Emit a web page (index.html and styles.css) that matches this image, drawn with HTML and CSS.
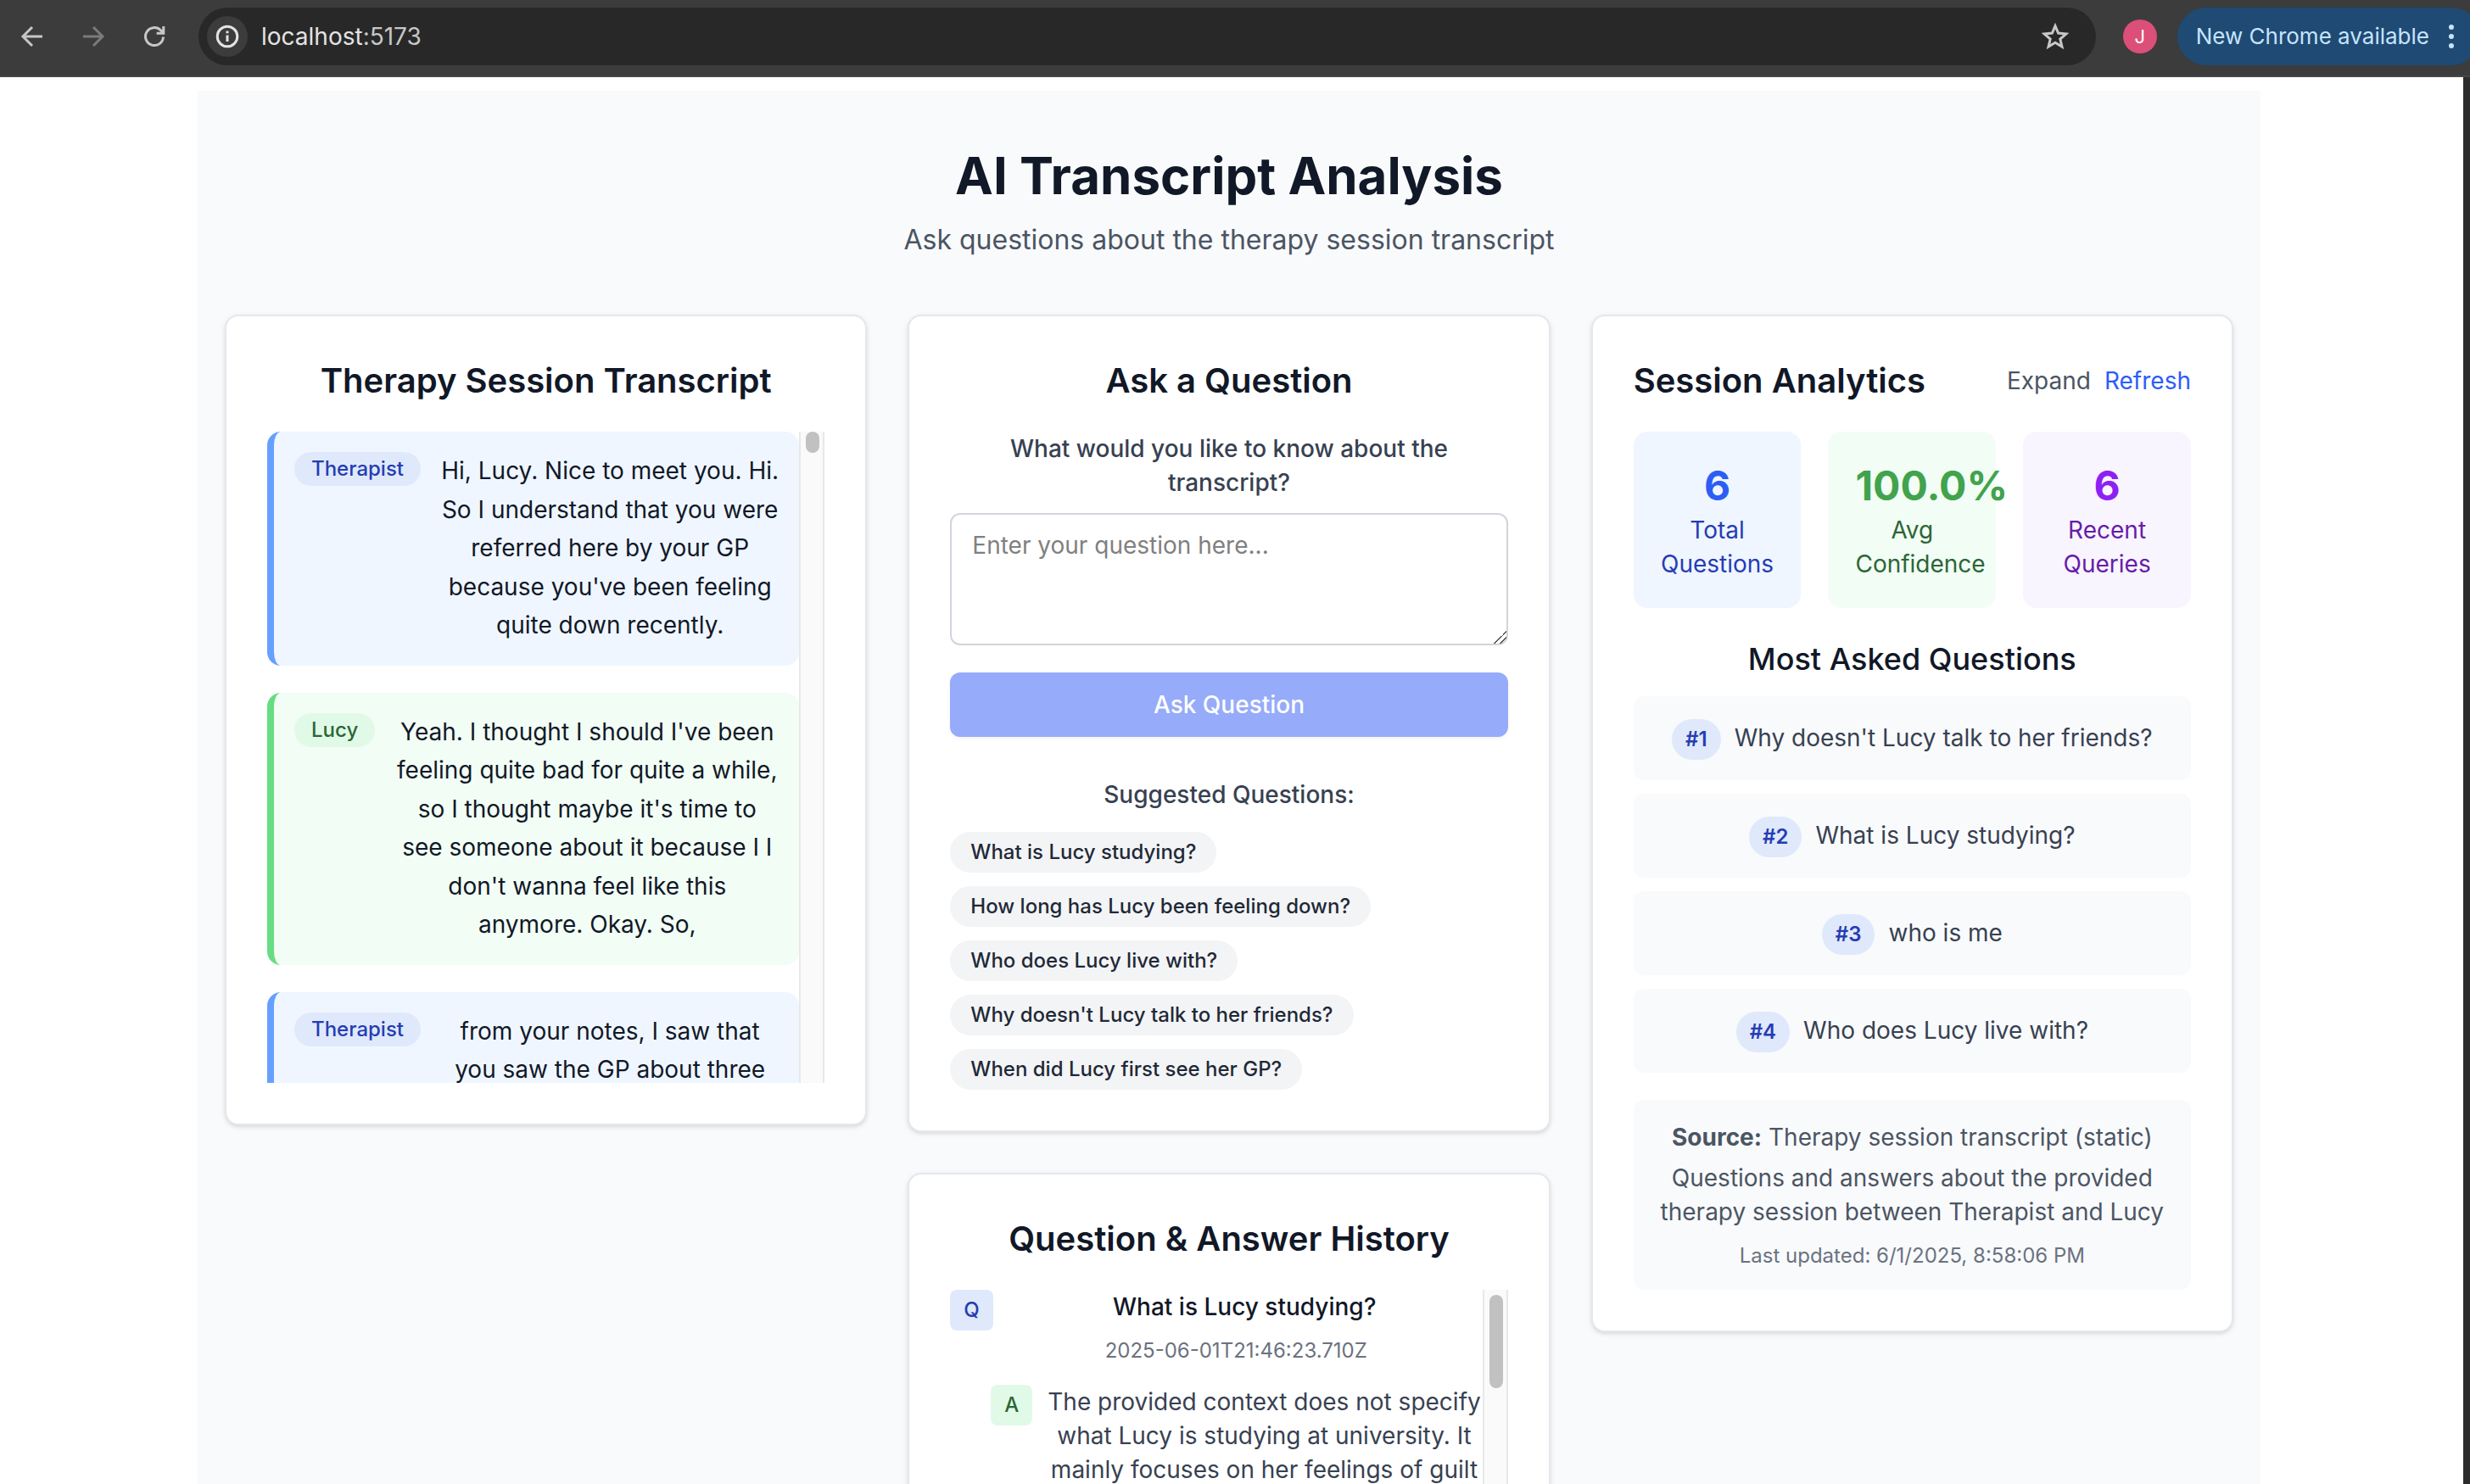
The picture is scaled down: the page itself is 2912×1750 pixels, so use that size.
FILE: index.html
```html
<!DOCTYPE html>
<html lang="en">
<head>
<meta charset="utf-8">
<title>AI Transcript Analysis</title>
<link rel="stylesheet" href="styles.css">
</head>
<body>
<div class="browser">
  <header class="toolbar">
    <nav class="toolbar-nav" aria-label="Browser">
      <button class="icon-button" type="button" aria-label="Back"><svg class="icon" viewBox="0 0 32 32"><path d="M28 16H5.500M16 5 5 16l11 11" /></svg></button>
      <button class="icon-button icon-button-off" type="button" aria-label="Forward" disabled><svg class="icon" viewBox="0 0 32 32"><path d="M4 16h22.500M16 5l11 11-11 11" /></svg></button>
      <button class="icon-button" type="button" aria-label="Reload"><svg class="icon" viewBox="0 0 32 32"><path d="M26.500 16.500A10.500 10.500 0 1 1 23.400 8.600L26.500 11.500M26.800 4v8.200H18.600" /></svg></button>
    </nav>
    <div class="address">
      <button class="site-info" type="button" aria-label="Site information"><svg class="icon" viewBox="0 0 32 32"><circle cx="16" cy="16" r="11.800" /><path d="M16 14.500v7.500M16 9.500v2.700" /></svg></button>
      <span class="address-text">localhost<span class="address-port">:5173</span></span>
      <button class="star" type="button" aria-label="Bookmark this page"><svg class="icon" viewBox="0 0 32 32"><path d="M16 3.500 19.600 12.100 28.900 12.900 21.800 19 24 28.100 16 23.200 8 28.100 10.200 19 3.100 12.900 12.400 12.100Z" /></svg></button>
    </div>
    <button class="avatar" type="button">J</button>
    <button class="update" type="button">New Chrome available<svg class="dots" viewBox="0 0 8 32"><circle cx="4" cy="5" r="3" /><circle cx="4" cy="16" r="3" /><circle cx="4" cy="27" r="3" /></svg></button>
  </header>

  <div class="page">
    <main class="app">
      <header class="hero">
        <h1 class="hero-title">AI Transcript Analysis</h1>
        <p class="hero-sub">Ask questions about the therapy session transcript</p>
      </header>

      <div class="columns">
        <section class="card">
          <h2 class="card-title">Therapy Session Transcript</h2>
          <div class="scroller">
            <div class="scroller-view turns">
              <article class="turn turn-blue">
                <span class="speaker speaker-blue">Therapist</span>
                <p class="turn-text">Hi, Lucy. Nice to meet you. Hi. So I understand that you were referred here by your GP because you've been feeling quite down recently.</p>
              </article>
              <article class="turn turn-green">
                <span class="speaker speaker-green">Lucy</span>
                <p class="turn-text">Yeah. I thought I should I've been feeling quite bad for quite a while, so I thought maybe it's time to see someone about it because I I don't wanna feel like this anymore. Okay. So,</p>
              </article>
              <article class="turn turn-blue">
                <span class="speaker speaker-blue">Therapist</span>
                <p class="turn-text">from your notes, I saw that you saw the GP about three</p>
              </article>
            </div>
            <div class="track" aria-hidden="true"><div class="thumb thumb-short"></div></div>
          </div>
        </section>

        <div class="stack">
          <section class="card">
            <h2 class="card-title">Ask a Question</h2>
            <form class="ask">
              <label class="ask-label" for="question">What would you like to know about the transcript?</label>
              <textarea class="ask-input" id="question" rows="3" placeholder="Enter your question here..."></textarea>
              <button class="ask-button" type="button">Ask Question</button>
            </form>
            <h3 class="suggest-title">Suggested Questions:</h3>
            <div class="suggestions">
              <button class="chip" type="button">What is Lucy studying?</button>
              <button class="chip" type="button">How long has Lucy been feeling down?</button>
              <button class="chip" type="button">Who does Lucy live with?</button>
              <button class="chip" type="button">Why doesn't Lucy talk to her friends?</button>
              <button class="chip" type="button">When did Lucy first see her GP?</button>
            </div>
          </section>

          <section class="card">
            <h2 class="card-title">Question &amp; Answer History</h2>
            <div class="scroller">
              <div class="scroller-view">
                <div class="entry">
                  <span class="mark mark-q">Q</span>
                  <div class="entry-body">
                    <p class="entry-question">What is Lucy studying?</p>
                    <p class="entry-time">2025-06-01T21:46:23.710Z</p>
                  </div>
                </div>
                <div class="entry entry-answer">
                  <span class="mark mark-a">A</span>
                  <p class="entry-body">The provided context does not specify what Lucy is studying at university. It mainly focuses on her feelings of guilt</p>
                </div>
              </div>
              <div class="track" aria-hidden="true"><div class="thumb thumb-long"></div></div>
            </div>
          </section>
        </div>

        <section class="card">
          <div class="card-head">
            <h2 class="card-title">Session Analytics</h2>
            <div class="card-actions">
              <button class="link" type="button">Expand</button>
              <button class="link link-blue" type="button">Refresh</button>
            </div>
          </div>
          <div class="stats">
            <div class="stat stat-blue"><div class="stat-value">6</div><div class="stat-label">Total Questions</div></div>
            <div class="stat stat-green"><div class="stat-value">100.0%</div><div class="stat-label">Avg Confidence</div></div>
            <div class="stat stat-purple"><div class="stat-value">6</div><div class="stat-label">Recent Queries</div></div>
          </div>
          <h3 class="top-title">Most Asked Questions</h3>
          <div class="top-list">
            <div class="top-item"><span class="rank">#1</span><span class="top-text">Why doesn't Lucy talk to her friends?</span></div>
            <div class="top-item"><span class="rank">#2</span><span class="top-text">What is Lucy studying?</span></div>
            <div class="top-item"><span class="rank">#3</span><span class="top-text">who is me</span></div>
            <div class="top-item"><span class="rank">#4</span><span class="top-text">Who does Lucy live with?</span></div>
          </div>
          <div class="source">
            <p><strong>Source:</strong> Therapy session transcript (static)</p>
            <p class="source-about">Questions and answers about the provided therapy session between Therapist and Lucy</p>
            <p class="source-time">Last updated: 6/1/2025, 8:58:06 PM</p>
          </div>
        </section>
      </div>
    </main>
  </div>
</div>
</body>
</html>
```
FILE: styles.css
```css
*, *::before, *::after { box-sizing: border-box; }

body, h1, h2, h3, p { margin: 0; }

body {
  background: #fff;
  color: #111827;
  font-family: Inter, "Liberation Sans", sans-serif;
  font-size: 32px;
  line-height: 48px;
}

button, textarea { font: inherit; color: inherit; }

button {
  display: flex;
  align-items: center;
  justify-content: center;
  padding: 0;
  border: 0;
  background: none;
}

.browser {
  display: flex;
  flex-direction: column;
  height: 100vh;
  overflow: hidden;
}

/* Browser toolbar */
.toolbar {
  display: flex;
  flex: none;
  align-items: center;
  padding: 9px 0 12px 22px;
  border-bottom: 2px solid #474747;
  background: #3c3c3c;
  color: #c7c7c7;
}

.toolbar-nav { display: flex; gap: 40px; margin-right: 36px; }
.icon-button { width: 32px; height: 32px; }
.icon-button-off { color: #7b7b7b; }

.icon {
  display: block;
  width: 32px;
  height: 32px;
  fill: none;
  stroke: currentColor;
  stroke-width: 3;
}

.address {
  display: flex;
  flex: 1;
  align-items: center;
  height: 68px;
  padding: 0 32px 0 10px;
  border-radius: 34px;
  background: #282828;
}

.site-info {
  width: 48px;
  height: 48px;
  margin-right: 16px;
  border-radius: 24px;
  background: #3c3c3c;
  color: #e3e3e3;
}

.address-text { flex: 1; color: #e3e3e3; font-size: 28px; }
.address-port { color: #c7c7c7; }

.avatar {
  width: 40px;
  height: 40px;
  margin: 0 24px 0 32px;
  border-radius: 20px;
  background: #db4f79;
  color: #fff;
  font-size: 22px;
}

.update {
  gap: 22px;
  height: 68px;
  margin-right: -12px;
  padding: 0 30px 0 22px;
  border-radius: 34px;
  background: #1f4a73;
  color: #c6e4ff;
  font-size: 26px;
  white-space: nowrap;
}

.dots { width: 8px; height: 32px; fill: currentColor; }

/* Page */
.page {
  flex: 1;
  min-height: 0;
  padding: 16px 6px 0 0;
  border-right: 8px solid #2c2c2c;
}

.app {
  max-width: 2432px;
  min-height: 100%;
  margin: 0 auto;
  padding: 64px 32px;
  background: #f9fafc;
}

.hero { margin-bottom: 64px; text-align: center; }
.hero-title { margin-bottom: 16px; font-size: 60px; font-weight: 700; line-height: 72px; }
.hero-sub { color: #4b5563; }

.columns {
  display: grid;
  grid-template-columns: repeat(3, minmax(0, 1fr));
  gap: 48px;
  align-items: start;
}

.stack { display: grid; gap: 48px; }

.card {
  padding: 48px;
  border: 2px solid #e5e7eb;
  border-radius: 16px;
  background: #fff;
  box-shadow: 0 2px 6px rgba(0, 0, 0, .1), 0 2px 4px -2px rgba(0, 0, 0, .1);
  font-size: 28px;
  line-height: 40px;
  text-align: center;
}

.card-title { margin-bottom: 32px; font-size: 40px; font-weight: 600; line-height: 56px; }

/* Scrolling panes */
.scroller { display: flex; height: 768px; }
.scroller-view { flex: 1; min-width: 0; overflow: hidden; }

.track {
  flex: none;
  width: 30px;
  padding-left: 6px;
  border: solid #e8e8e8;
  border-width: 0 2px;
  background: #fafafa;
}

.thumb { width: 16px; border-radius: 8px; background: #c1c1c1; }
.thumb-short { height: 25px; }
.thumb-long { height: 110px; margin-top: 6px; }

/* Transcript */
.turns { display: flex; flex-direction: column; gap: 32px; }

.turn {
  display: flex;
  flex: none;
  gap: 24px;
  align-items: flex-start;
  padding: 24px;
  border-left: 8px solid;
  border-radius: 16px;
}

.turn-blue { border-color: #66a0ff; background: #eff6ff; }
.turn-green { border-color: #68dc82; background: #f2fdf5; }
.turn-text { flex: 1; line-height: 1.625; }

.speaker {
  padding: 4px 20px;
  border-radius: 20px;
  font-size: 24px;
  font-weight: 500;
  line-height: 32px;
}

.speaker-blue { background: #dfe9fb; color: #263cb4; }
.speaker-green { background: #e1fae8; color: #2c6636; }

/* Ask form */
.ask { display: flex; flex-direction: column; }
.ask-label { margin-bottom: 16px; color: #374151; font-weight: 500; }

.ask-input {
  display: block;
  width: 100%;
  margin: 0 0 32px;
  padding: 16px 24px;
  border: 2px solid #d1d5db;
  border-radius: 12px;
  resize: vertical;
}

.ask-input::placeholder { color: #808080; }

.ask-input::-webkit-resizer {
  background: linear-gradient(135deg, transparent 50%, #555 50%, #555 56%, transparent 56%, transparent 72%, #555 72%, #555 78%, transparent 78%);
}

.ask-button {
  height: 76px;
  border-radius: 12px;
  background: #96abfa;
  box-shadow: 0 2px 4px rgba(0, 0, 0, .05);
  color: #fff;
  font-weight: 500;
}

.suggest-title { margin: 48px 0 24px; color: #374151; font-size: 28px; font-weight: 500; }
.suggestions { display: flex; flex-direction: column; gap: 16px; align-items: flex-start; }

.chip {
  padding: 8px 24px;
  border-radius: 24px;
  background: #f3f4f6;
  color: #1f2937;
  font-size: 24px;
  font-weight: 500;
  line-height: 32px;
}

/* History */
.entry { display: flex; gap: 16px; align-items: flex-start; }
.entry-answer { margin-top: 24px; padding-left: 48px; color: #374151; }
.entry-body { flex: 1; }
.entry-question { font-weight: 500; }
.entry-time { margin-top: 16px; padding-right: 20px; color: #6b7280; font-size: 24px; line-height: 32px; }

.mark {
  padding: 8px 16px;
  border-radius: 8px;
  font-size: 24px;
  font-weight: 500;
  line-height: 32px;
}

.mark-q { background: #dfe9fb; color: #263cb4; }
.mark-a { background: #e1fae8; color: #2c6636; }

/* Analytics */
.card-head { display: flex; align-items: center; justify-content: space-between; margin-bottom: 32px; }
.card-head .card-title { margin-bottom: 0; }
.card-actions { display: flex; gap: 16px; }
.link { color: #4b5563; }
.link-blue { color: #2c5ef6; }

.stats { display: grid; grid-template-columns: repeat(3, minmax(0, 1fr)); gap: 32px; }
.stat { padding: 32px; border-radius: 16px; }
.stat-value { font-size: 48px; font-weight: 700; line-height: 64px; }
.stat-blue { background: #eff6ff; color: #263cb4; }
.stat-blue .stat-value { color: #2c5ef6; }
.stat-green { background: #f2fdf5; color: #2c6636; }
.stat-green .stat-value { color: #41a34c; }
.stat-purple { background: #f9f5ff; color: #661da8; }
.stat-purple .stat-value { color: #8f20f5; }

.top-title { margin: 32px 0 16px; font-size: 36px; font-weight: 500; line-height: 56px; }
.top-list { display: grid; gap: 16px; }

.top-item {
  padding: 24px;
  border-radius: 12px;
  background: #f9fafc;
  font-size: 32px;
  line-height: 48px;
}

.rank {
  display: inline-block;
  margin-right: 16px;
  padding: 8px 16px;
  border-radius: 24px;
  background: #dfe9fb;
  color: #263cb4;
  font-size: 24px;
  font-weight: 600;
  line-height: 32px;
}

.top-text { color: #374151; font-size: 28px; line-height: 40px; }

.source {
  margin-top: 32px;
  padding: 24px;
  border-radius: 12px;
  background: #f9fafc;
  color: #4b5563;
}

.source-about { margin-top: 8px; }
.source-time { margin-top: 16px; color: #6b7280; font-size: 24px; line-height: 32px; }
```
